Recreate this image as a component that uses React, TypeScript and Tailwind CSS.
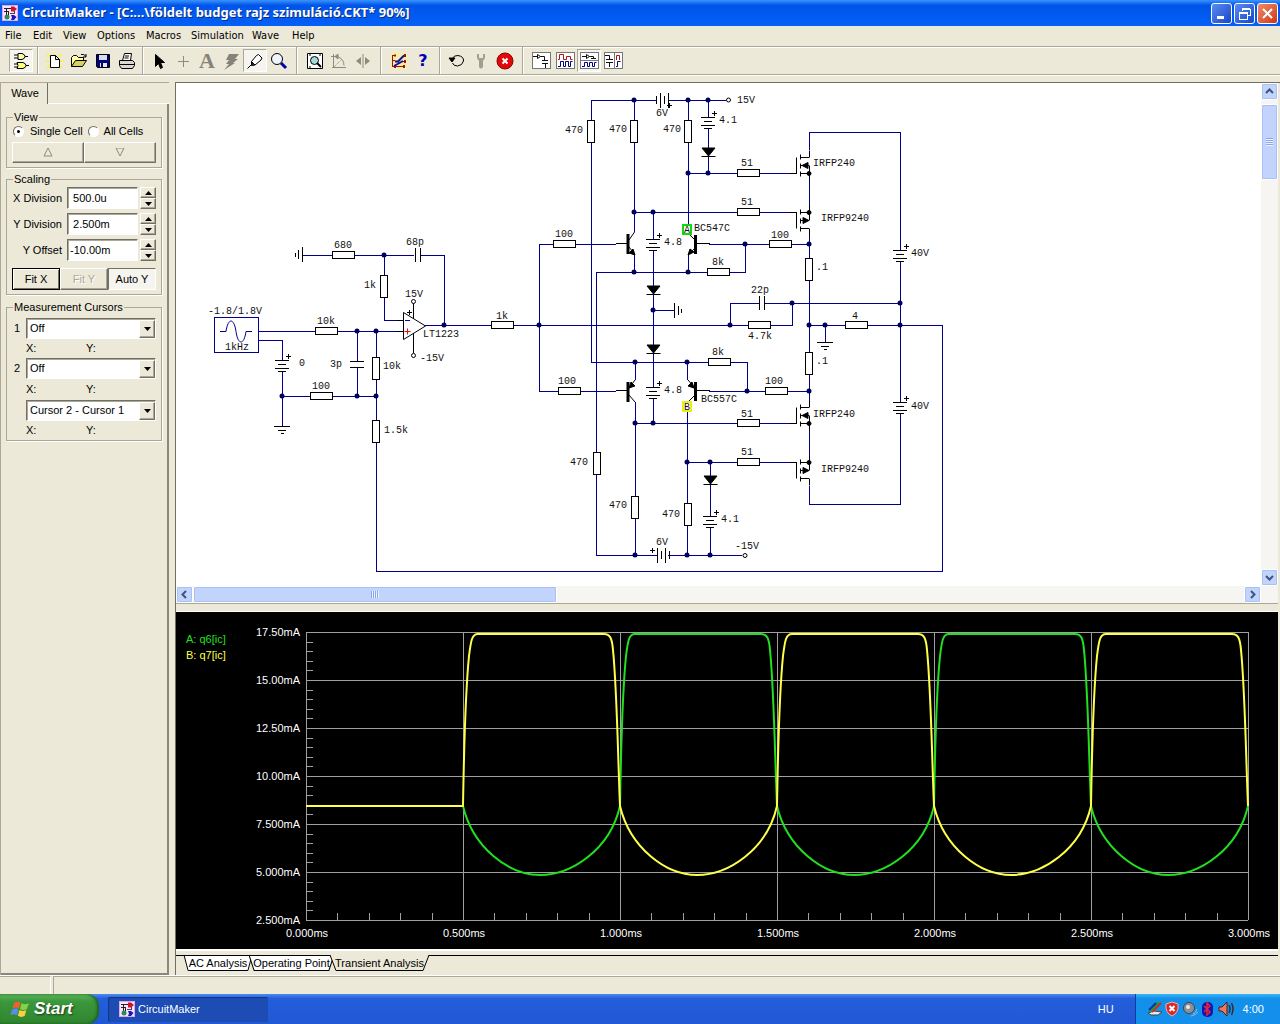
import type { ReactNode } from "react";
import clsx from "clsx";

const UI = "font-['Liberation_Sans',Arial,sans-serif]";
const TAHOMA = "font-['DejaVu_Sans_Condensed','DejaVu_Sans',sans-serif]";

const WIRE = "#00008b";

/* ---------- icons ---------- */

const Icon = ({ children, size = 18 }: { children: ReactNode; size?: number }) => (
  <svg width={size} height={size} viewBox="0 0 18 18" fill="none" stroke="#000" aria-hidden="true">
    {children}
  </svg>
);

const AppIcon = () => (
  <svg width="16" height="16" viewBox="0 0 16 16" fill="none" className="shrink-0" aria-hidden="true">
    <rect width="16" height="16" fill="#fbe4fb" />
    <rect x="0.500" y="0.500" width="15" height="15" stroke="#e0a8e8" />
    <path d="M2 3.500h7M2 6.500h5M4.500 3v8M6.500 6v5" stroke="#222" />
    <path d="M9 1.500h3l3 2.500-3 2.500H9z" fill="#d0122b" />
    <path d="M8 8.500h5M12.500 6v3" stroke="#444" />
    <circle cx="5" cy="12" r="2.500" fill="#2c8a56" />
    <path d="M9 10h3l2.500 2-2.500 3H9l1-2.500z" fill="#1616b8" />
  </svg>
);

const GateIcon = () => (
  <Icon>
    <path d="M6 1.500h4q3 1 3 3t-3 3H6zM2 3h4M2 6h4M13 4.500h3" fill="#ffffa8" />
    <path d="M5 10.500h6q3 1 3 3t-3 3H5q2-3 0-6zM2 12h4M2 15h4M14 13.500h3" fill="#ffff80" />
  </Icon>
);
const NewIcon = () => (
  <Icon>
    <path d="M1 2l3 3M0 9h3M1 16l3-3M16 2l-3 3M14 9h4M13 13l3 3M8 0v3" stroke="#f4f06a" strokeWidth="2" />
    <path d="M4.500 3.500h5l4 4v8h-9zM9.500 3.500v4h4" fill="#fff" />
  </Icon>
);
const OpenIcon = () => (
  <Icon>
    <path d="M1.500 14.500v-9l2-2h3l2 2h5v3" fill="#ffff9c" />
    <path d="M1.500 14.500l4-6h11l-4 6z" fill="#d8d060" />
    <path d="M11 2.500q3-1 5 2M16 2v3h-3" />
  </Icon>
);
const SaveIcon = () => (
  <Icon>
    <path d="M2.500 2.500h13v13h-12l-1-1z" fill="#00007c" />
    <path d="M5 3h8v5H5z" fill="#d8dce8" stroke="none" />
    <path d="M6 11h7v4H6z" fill="#e4e4e4" stroke="none" />
    <path d="M7 11h2v4H7z" fill="#00007c" stroke="none" />
  </Icon>
);
const PrintIcon = () => (
  <Icon>
    <path d="M4.500 8.500l2-7h7l-1 7z" fill="#fff" />
    <path d="M1.500 8.500h13l2 2v3l-2 3h-11l-2-3z" fill="#d8d8d0" />
    <path d="M1.500 12.500h15M7 4h4M6.500 6h4" />
  </Icon>
);
const ArrowIcon = () => (
  <Icon>
    <path d="M5.500 2.500v12l3-3 2 5 2-1-2-5h4z" fill="#000" />
  </Icon>
);
const PlusIcon = () => (
  <Icon>
    <path d="M9.500 4v11M4 9.500h11" stroke="#8d8b80" />
  </Icon>
);
const BoltIcon = () => (
  <Icon>
    <path d="M7 2h10l-4 5h3l-5 4h2l-11 7 5-6H4l3-4H4z" fill="#86847a" stroke="none" />
  </Icon>
);
const ProbeIcon = () => (
  <Icon>
    <path d="M1.500 16.500l4-4M5.500 9.500l5-6 2-1 3.500 3.500-1 2-6 5z" fill="#fff" />
    <path d="M5.500 9.500l3.500 3.500-3.500.500z" fill="#333" />
  </Icon>
);
const ZoomIcon = () => (
  <Icon>
    <circle cx="7" cy="7" r="5.500" fill="#eef4f8" />
    <path d="M11 11l5 5" stroke="#0000ac" strokeWidth="3" />
  </Icon>
);
const FitIcon = () => (
  <Icon>
    <path d="M1.500 1.500h15v15h-15z" fill="#fff" />
    <circle cx="8.500" cy="8.500" r="4" fill="#a8d8d8" />
    <path d="M11 11l4 4" strokeWidth="2" />
    <path d="M3 3h2M3 15h2M13 3h2" />
  </Icon>
);
const RotateIcon = () => (
  <Icon>
    <g stroke="#8d8b80">
      <path d="M3.500 2v14M1 4.500h4M2 15.500h14" />
      <path d="M7 4.500q7 2 7 9" />
      <path d="M4 15l8-8" strokeDasharray="1 1" />
      <path d="M8 2v5L5 4.500z" fill="#8d8b80" />
    </g>
  </Icon>
);
const MirrorIcon = () => (
  <Icon>
    <path d="M9 2v14" stroke="#8d8b80" />
    <path d="M7 5v8L2 9zM11 5v8l5-4z" fill="#8d8b80" stroke="none" />
  </Icon>
);
const CheckWiresIcon = () => (
  <Icon>
    <path d="M1 1h16v16H1z" fill="#f7efa4" stroke="none" />
    <path d="M2 3.500h4M2 8.500h3M2 14.500h12M2.500 3v12M13 3.500h3M13 9.500h3" stroke="#a01010" />
    <path d="M5 2.500v2M15 2v3M15 8v3M14 13v3M5 13v3" stroke="#a01010" strokeWidth="2" />
    <path d="M5 9.500h3l6-6M4 14l9-5" stroke="#1010a0" strokeWidth="2" />
  </Icon>
);
const UndoIcon = () => (
  <Icon>
    <path d="M4 7q2-4 6-3.500 6 1 5.500 5.500-1 4.500-6 5-4 0-5-3" />
    <path d="M1 6h6l-3 4z" fill="#000" />
  </Icon>
);
const WrenchIcon = () => (
  <Icon>
    <path d="M5 2v4l2 3v6q2 3 4 0V9l2-3V2h-2v4H7V2z" fill="#a19f94" stroke="none" />
  </Icon>
);
const StopIcon = () => (
  <Icon>
    <circle cx="9" cy="9" r="8" fill="#e00808" stroke="#8c0000" />
    <path d="M6.500 6.500l5 5M11.500 6.500l-5 5" stroke="#fff" strokeWidth="2" />
  </Icon>
);

const Frame = ({ children }: { children: ReactNode }) => (
  <svg width="19" height="18" viewBox="0 0 19 18" fill="none" stroke={WIRE} aria-hidden="true">
    <rect x="0.500" y="0.500" width="18" height="16" fill="#fff" stroke="#777" />
    {children}
  </svg>
);
const SchematicView = () => (
  <Frame>
    <path d="M1 4.500h4M5.500 2.500v4l3-2zM8.500 4.500h4v4M10 8.500h6M10 11.500h6M13.500 12v4" stroke="#111" />
  </Frame>
);
const WaveView = () => (
  <Frame>
    <path d="M2 7.500h1.500v-5h4v5h3v-3h4v3h2" stroke="#b01818" />
    <path d="M2 14.500h2.500v-5h3v5h2v-5h3v5h2v-5h2" />
  </Frame>
);
const SplitHView = () => (
  <Frame>
    <path d="M1 8.500h17" stroke="#777" />
    <path d="M2 4.500h4M6.500 2.500v4l3-2zM9.500 4.500h4v2M11 6.500h5" stroke="#111" />
    <path d="M2 14.500h2.500v-4h3v4h2v-4h3v4h2v-4h2" />
  </Frame>
);
const SplitVView = () => (
  <Frame>
    <path d="M10.500 1v15" stroke="#777" />
    <path d="M1 3.500h4.500v4M2 7.500h7M2 10.500h7M5.500 11v4" stroke="#111" />
    <path d="M12.500 8V3.500h3V8" stroke="#b01818" />
    <path d="M12 14.500h1.500v-5h3" />
  </Frame>
);

/* ---------- title, menu, toolbar ---------- */

const winBtn = "flex size-[21px] items-center justify-center rounded-[3px] border border-white";

const TitleBar = () => (
  <header className="flex h-[26px] shrink-0 items-center bg-linear-to-b from-[#3a93ff] via-[#0055e8] via-20% to-[#0460f8] pr-[2px] pl-[2px]">
    <AppIcon />
    <h1 className="ml-1 flex-1 truncate font-['Noto_Sans','Open_Sans',sans-serif] text-[13px] font-bold text-white [text-shadow:1px_1px_#0a2a80]">
      {"CircuitMaker - [C:...\\földelt budget rajz szimuláció.CKT* 90%]"}
    </h1>
    <div className="flex gap-[2px]">
      <button aria-label="Minimize" className={clsx(winBtn, "bg-linear-to-br from-[#5b8cf0] to-[#1844c8]")}>
        <svg width="13" height="13" viewBox="0 0 13 13"><path d="M2 9h7v3H2z" fill="#fff" /></svg>
      </button>
      <button aria-label="Restore" className={clsx(winBtn, "bg-linear-to-br from-[#5b8cf0] to-[#1844c8]")}>
        <svg width="13" height="13" viewBox="0 0 13 13" fill="none" stroke="#fff" shapeRendering="crispEdges">
          <path d="M4 4V2h8v6h-2M4 1h8M1 5h8v7H1zM1 6h8" />
        </svg>
      </button>
      <button aria-label="Close" className={clsx(winBtn, "bg-linear-to-br from-[#f08a68] to-[#cc3512]")}>
        <svg width="13" height="13" viewBox="0 0 13 13"><path d="M2 2l9 9M11 2l-9 9" stroke="#fff" strokeWidth="2" /></svg>
      </button>
    </div>
  </header>
);

const menus = [
  ["File", "w-[28px]"],
  ["Edit", "w-[30px]"],
  ["View", "w-[34px]"],
  ["Options", "w-[49px]"],
  ["Macros", "w-[45px]"],
  ["Simulation", "w-[61px]"],
  ["Wave", "w-[40px]"],
  ["Help", "w-[30px]"],
];

const MenuBar = () => (
  <nav className={clsx("flex h-[20px] shrink-0 items-center pl-[5px] text-[11px]", TAHOMA)}>
    {menus.map(([label, width]) => (
      <button key={label} className={clsx("text-left whitespace-nowrap", width)}>{label}</button>
    ))}
  </nav>
);

const Tool = ({ label, pressed, children }: { label: string; pressed?: boolean; children: ReactNode }) => (
  <button
    aria-label={label}
    className={clsx(
      "flex h-[23px] w-6 items-center justify-center",
      pressed && "border border-[#aca899] border-r-white border-b-white bg-[#f5f4ee]",
    )}
  >
    {children}
  </button>
);

const Sep = ({ className = "mx-1" }: { className?: string }) => (
  <div className={clsx("h-[27px] w-[2px] border-l border-[#aca899] bg-white", className)} />
);

const Toolbar = () => (
  <div className="flex h-[29px] shrink-0 items-center border-y border-[#aca899] pl-[9px] shadow-[inset_0_1px_0_#fff,0_1px_0_#fff]">
    <Tool label="Parts" pressed><GateIcon /></Tool>
    <Sep />
    <Tool label="New"><NewIcon /></Tool>
    <Tool label="Open"><OpenIcon /></Tool>
    <Tool label="Save"><SaveIcon /></Tool>
    <Tool label="Print"><PrintIcon /></Tool>
    <Sep className="mx-[3px]" />
    <Tool label="Select"><ArrowIcon /></Tool>
    <Tool label="Wire"><PlusIcon /></Tool>
    <Tool label="Text">
      <span className="font-['Liberation_Serif',serif] text-[22px] leading-none font-bold text-[#86847a]">A</span>
    </Tool>
    <Tool label="Delete"><BoltIcon /></Tool>
    <Tool label="Probe" pressed><ProbeIcon /></Tool>
    <Tool label="Zoom"><ZoomIcon /></Tool>
    <Sep className="mx-[5px]" />
    <Tool label="Fit"><FitIcon /></Tool>
    <Tool label="Rotate"><RotateIcon /></Tool>
    <Tool label="Mirror"><MirrorIcon /></Tool>
    <Sep className="mx-[5px]" />
    <Tool label="Check wires"><CheckWiresIcon /></Tool>
    <Tool label="Help">
      <span className="font-['DejaVu_Sans',sans-serif] text-[16px] leading-none font-bold text-[#0000b0]">?</span>
    </Tool>
    <Sep />
    <Tool label="Reset"><UndoIcon /></Tool>
    <Tool label="Setup"><WrenchIcon /></Tool>
    <Tool label="Stop"><StopIcon /></Tool>
    <Sep className="mx-[5px]" />
    <Tool label="Schematic"><SchematicView /></Tool>
    <Tool label="Waveforms"><WaveView /></Tool>
    <Tool label="Split horizontally" pressed><SplitHView /></Tool>
    <Tool label="Split vertically"><SplitVView /></Tool>
  </div>
);

/* ---------- wave panel ---------- */

const raised = "border border-white border-r-[#716f64] border-b-[#716f64] shadow-[inset_-1px_-1px_0_#aca899]";
const sunken = "border border-[#716f64] border-r-white border-b-white bg-white shadow-[inset_1px_1px_0_#aca899]";

const Group = ({ title, className, children }: { title: string; className?: string; children: ReactNode }) => (
  <fieldset className={clsx("mx-[5px] border border-[#aca899] shadow-[1px_1px_0_#fff]", className)}>
    <legend className="ml-[6px] px-px leading-[12px]">{title}</legend>
    {children}
  </fieldset>
);

const Spin = ({ label, id, value }: { label: string; id: string; value: string }) => (
  <div className="flex h-[22px] items-center">
    <label htmlFor={id} className="w-[55px] text-right">{label}</label>
    <input id={id} defaultValue={value} className={clsx("ml-[5px] h-[22px] w-[71px] pl-[2px] outline-none", sunken)} />
    <div className="ml-[2px] flex w-4 flex-col">
      <button aria-label={`${label} up`} className={clsx("flex h-[11px] items-center justify-center", raised)}>
        <svg width="7" height="4" viewBox="0 0 7 4"><path d="M0 4h7L3.500 0z" /></svg>
      </button>
      <button aria-label={`${label} down`} className={clsx("flex h-[11px] items-center justify-center", raised)}>
        <svg width="7" height="4" viewBox="0 0 7 4"><path d="M0 0h7L3.500 4z" /></svg>
      </button>
    </div>
  </div>
);

const Cursor = ({ label, name, value, tall }: { label: string; name: string; value: string; tall?: boolean }) => (
  <div>
    <div className="flex items-center">
      <span className="w-[19px] pl-[7px]">{label}</span>
      <div className="relative w-[130px]">
        <select aria-label={name} className={clsx("block h-[21px] w-full appearance-none pl-[3px] outline-none", sunken)}>
          <option>{value}</option>
        </select>
        <span className={clsx("pointer-events-none absolute top-[2px] right-px flex h-[18px] w-4 items-center justify-center bg-[#ece9d8]", raised)}>
          <svg width="7" height="4" viewBox="0 0 7 4"><path d="M0 0h7L3.500 4z" /></svg>
        </span>
      </div>
    </div>
    <div className={clsx("flex items-center pl-[19px]", tall ? "h-[21px]" : "h-[19px]")}>
      <span className="w-[60px]">X:</span>
      <span>Y:</span>
    </div>
  </div>
);

const radio = "relative size-[11px] appearance-none rounded-full border border-[#716f64] border-r-white border-b-white bg-white checked:after:absolute checked:after:inset-[3px] checked:after:rounded-full checked:after:bg-black";

const WavePanel = () => (
  <aside className={clsx("flex w-[169px] shrink-0 flex-col border-t border-l border-[#aca899] text-[11px]", UI)}>
    <div className="flex h-[21px] items-end">
      <button className="h-[21px] w-[47px] border-r border-[#716f64] pl-[2px] text-center">Wave</button>
      <span className="h-px flex-1 bg-white" />
    </div>
    <div className="flex-1 border-r-2 border-b-2 border-[#8a887b] pt-[7px]">
      <Group title="View" className="h-[57px]">
        <div className="flex h-4 items-center pl-[6px]">
          <label className="flex items-center gap-[6px]">
            <input type="radio" name="cell" defaultChecked className={radio} />
            Single Cell
          </label>
          <label className="ml-[5px] flex items-center gap-[5px]">
            <input type="radio" name="cell" className={radio} />
            All Cells
          </label>
        </div>
        <div className="mx-[5px] mt-[3px] flex">
          <button aria-label="Previous cell" className={clsx("flex h-[21px] flex-1 items-center justify-center", raised)}>
            <svg width="11" height="9" viewBox="0 0 11 9"><path d="M1 8h8L5 0z" fill="none" stroke="#8d8b80" /></svg>
          </button>
          <button aria-label="Next cell" className={clsx("flex h-[21px] flex-1 items-center justify-center", raised)}>
            <svg width="11" height="9" viewBox="0 0 11 9"><path d="M1 0h8L5 8z" fill="none" stroke="#8d8b80" /></svg>
          </button>
        </div>
      </Group>
      <Group title="Scaling" className="mt-[5px] pb-1">
        <div className="flex flex-col gap-1 pt-[2px]">
          <Spin label="X Division" id="xdiv" value=" 500.0u" />
          <Spin label="Y Division" id="ydiv" value=" 2.500m" />
          <Spin label="Y Offset" id="yoff" value="-10.00m" />
        </div>
        <div className="mx-[5px] mt-[7px] flex">
          <button className="h-[22px] flex-1 border border-black shadow-[inset_1px_1px_0_#fff,inset_-1px_-1px_0_#716f64]">Fit X</button>
          <button disabled className={clsx("h-[22px] flex-1 text-[#aca899] [text-shadow:1px_1px_#fff]", raised)}>Fit Y</button>
          <button className="h-[22px] flex-1 border border-[#716f64] border-r-white border-b-white bg-[#f5f4ee] pt-px">Auto Y</button>
        </div>
      </Group>
      <Group title="Measurement Cursors" className="mt-[6px] pt-[5px]">
        <Cursor label="1" name="Cursor 1" value="Off" />
        <Cursor label="2" name="Cursor 2" value="Off" tall />
        <Cursor label="" name="Difference" value="Cursor 2 - Cursor 1" />
      </Group>
    </div>
  </aside>
);

/* ---------- schematic ---------- */

const wires = [
  "M302 255H332M353 255H414M420 255H444V325M384 255V275M384 297V320H403",
  "M258 331H315M337 331H403M258 340H282V360M282 371V426M282 396H310M332 396H376",
  "M357 331V361M357 367V396M376 331V357M376 379V420M376 442V571H942V325H867",
  "M425 325H491M513 325H748M770 325H792V303M730 325V303H759M765 303H900",
  "M553 244H539V391H558M575 244H616M580 391H616",
  "M591 120V100H656M591 142V362H708M730 362H747V391",
  "M634 100V120M634 142V232M669 100H726M688 100V120M688 142V224M708 100V117M708 128V173",
  "M688 173H737M759 173H790M634 212H737M759 212H790M653 212V239M653 250V387M653 310H674",
  "M634 255V272M596 452V272H707M688 272V254M729 272H745V244M709 244H769M791 244H809",
  "M809 150V132H900V250M900 261V402M900 413V504H809V486M809 180V206M809 235V258M809 280V352M809 374V402",
  "M809 325H845M825 325V342M809 430V456",
  "M635 362V380M635 402V496M635 518V555M653 398V423M687 362V380M709 391H765M787 391H809",
  "M635 423H737M759 423H790M687 411V503M687 525V555M687 462H737M759 462H790",
  "M710 462V516M710 527V555M596 474V555H657M668 555H742",
];

const dots = [
  [384, 255], [444, 325], [357, 331], [376, 331], [282, 396], [357, 396], [376, 396], [539, 325],
  [634, 100], [688, 100], [708, 100], [688, 173], [708, 173], [634, 212], [653, 212], [634, 272],
  [688, 272], [745, 244], [809, 244], [653, 310], [730, 325], [792, 303], [900, 303], [809, 325],
  [825, 325], [900, 325], [635, 362], [687, 362], [747, 391], [809, 391], [635, 423], [653, 423],
  [687, 462], [710, 462], [635, 555], [687, 555], [710, 555],
];

// left edge and centre line
const hResistors = [
  [332, 255], [315, 331], [310, 396], [491, 325], [553, 244], [558, 391], [737, 173], [737, 212],
  [707, 272], [769, 244], [748, 325], [845, 325], [708, 362], [765, 391], [737, 423], [737, 462],
];

// centre line and top edge
const vResistors = [
  [384, 275], [376, 357], [376, 420], [591, 120], [634, 120], [688, 120], [809, 258], [809, 352],
  [597, 452], [635, 496], [688, 503],
];

const batteries = [[282, 360], [708, 117], [653, 239], [900, 250], [900, 402], [653, 387], [710, 516]];
const diodes = [[708, 148], [653, 286], [653, 345], [710, 476]];

const labels: [number, number, string][] = [
  [334, 248, "680"], [406, 245, "68p"], [364, 288, "1k"], [405, 297, "15V"], [420, 361, "-15V"],
  [423, 337, "LT1223"], [208, 314, "-1.8/1.8V"], [225, 350, "1kHz"], [317, 324, "10k"], [299, 366, "0"],
  [330, 367, "3p"], [383, 369, "10k"], [312, 389, "100"], [384, 433, "1.5k"], [496, 319, "1k"],
  [565, 133, "470"], [609, 132, "470"], [663, 132, "470"], [656, 116, "6V"], [737, 103, "15V"],
  [719, 123, "4.1"], [741, 166, "51"], [741, 205, "51"], [813, 166, "IRFP240"], [821, 221, "IRFP9240"],
  [555, 237, "100"], [664, 245, "4.8"], [694, 231, "BC547C"], [712, 265, "8k"], [771, 238, "100"],
  [816, 270, ".1"], [911, 256, "40V"], [751, 293, "22p"], [748, 339, "4.7k"], [852, 319, "4"],
  [712, 355, "8k"], [816, 364, ".1"], [558, 384, "100"], [664, 393, "4.8"], [701, 402, "BC557C"],
  [765, 384, "100"], [813, 417, "IRFP240"], [911, 409, "40V"], [741, 417, "51"], [741, 455, "51"],
  [821, 472, "IRFP9240"], [570, 465, "470"], [609, 508, "470"], [662, 517, "470"], [721, 522, "4.1"],
  [656, 545, "6V"], [735, 549, "-15V"],
];

const Mosfet = ({ y, n }: { y: number; n?: boolean }) => (
  <g>
    <path d={`M796.500 ${y - 8}v16M790 ${n ? y + 8 : y - 8}h7M800.500 ${y - 11}v5M800.500 ${y - 2}v5M800.500 ${y + 6}v5`} />
    <path d={`M801 ${y - 8}h8M801 ${y}h8M801 ${y + 8}h8M809.500 ${n ? y : y - 15}V${y + (n ? 15 : 0)}M809.500 ${n ? y - 8 : y + 8}v${n ? -7 : 7}`} />
    <path d={n ? `M802 ${y}l6-3v6z` : `M809 ${y}l-6-3v6z`} fill="#000" />
    <circle cx="809" cy={n ? y + 8 : y - 8} r="2" fill="#000" />
  </g>
);

const Schematic = () => (
  <svg width="1085" height="503" viewBox="176 83 1085 503" className="block" role="img" aria-label="Schematic">
    <g fill="none" stroke={WIRE} shapeRendering="crispEdges">
      {wires.map((d) => <path key={d} d={d} />)}
      <rect x="214" y="317" width="44" height="35" />
    </g>
    <path d="M220 331.500h6c2-14 8-14 10 0s8 14 10 0h6" fill="none" stroke={WIRE} />

    <g fill="none" stroke="#000" shapeRendering="crispEdges">
      {hResistors.map(([x, y]) => <rect key={`${x}-${y}`} x={x} y={y - 4} width="22" height="7" fill="#fff" />)}
      {vResistors.map(([x, y]) => <rect key={`${x}-${y}`} x={x - 4} y={y} width="7" height="22" fill="#fff" />)}
      {batteries.map(([x, y]) => (
        <path key={`${x}-${y}`} d={`M${x - 7} ${y}h14M${x - 4} ${y + 4}h8M${x - 7} ${y + 8}h14M${x - 4} ${y + 11}h8M${x + 4} ${y - 4}h5M${x + 6} ${y - 6}v5`} />
      ))}
      <path d="M656 96v8M660 93v15M664 96v8M668 93v15M667 105h5M669 103v5" />
      <path d="M657 548v15M661 551v8M665 548v15M669 551v8M650 550h5M652 548v5" />
      {/* capacitors */}
      <path d="M415 248v14M420 248v14M350 361h14M350 367h14M759 296v14M764 296v14" />
      {/* grounds */}
      <path d="M302 247v15M298 250v9M295 253v4M274 426h16M278 430h8M281 433h3" />
      <path d="M674 303v15M678 306v9M681 309v4M817 342h16M821 346h8M824 349h3" />
      <path d="M413 303v15M413 332v21M397 320h6M397 331h6M407 312h5M409 310v5" />
    </g>

    <g fill="none" stroke="#000">
      {diodes.map(([x, y]) => (
        <path key={`${x}-${y}`} d={`M${x - 6} ${y}h13l-6.500 8zM${x - 6.500} ${y + 8.500}h14`} fill="#000" />
      ))}
      <Mosfet y={165.5} n />
      <Mosfet y={220.5} />
      <Mosfet y={415.5} n />
      <Mosfet y={470.5} />
      <path d="M403.500 312.500v27l22-13.500z" fill="#fff" />
      <path d="M413.500 313v5.500M413.500 333v5M407 312.500h5M409.500 310v5" />
      <path d="M405 320.500h5" stroke="#0000d0" />
      <path d="M404.500 331.500h6M407.500 328.500v6" stroke="#e01010" />
      <g fill="#fff">
        <circle cx="413.500" cy="301.500" r="2" />
        <circle cx="413.500" cy="355.500" r="2" />
        <circle cx="728.500" cy="100" r="2" />
        <circle cx="745" cy="555.500" r="2" />
      </g>
      {/* transistors */}
      <path d="M628 234v20M628 382v20M695.500 235v19M695.500 382v19" strokeWidth="3" />
      <path d="M616 243.500h11M629 240l5.500-8M629 247l5.500 7M695 240l-6-6M695 248l-6 6M697 243.500h13" />
      <path d="M635 255l-6-2 4-4zM688 255l2-6 4 3z" fill="#000" />
      <path d="M616 390.500h11M629 388l6-8M629 395l6 7M695 388l-7-8M695 395l-7 7M697 390.500h13" />
      <path d="M629 388l2-6 4 4zM694 388l-2-6-4 4z" fill="#000" />
    </g>

    <g fill="#00005c">
      {dots.map(([x, y]) => <circle key={`${x}-${y}`} cx={x} cy={y} r="2.500" />)}
    </g>

    <g fill="#fff" strokeWidth="2" shapeRendering="crispEdges">
      <rect x="683" y="225" width="8" height="9" stroke="#10d810" />
      <rect x="683" y="402" width="8" height="9" stroke="#f0ec10" />
    </g>

    <g fill="#111" className="font-['Liberation_Mono','Courier_New',monospace] text-[10px]">
      {labels.map(([x, y, text]) => <text key={`${x}-${y}`} x={x} y={y}>{text}</text>)}
      <text x="684" y="233">A</text>
      <text x="684" y="410">B</text>
    </g>
  </svg>
);

/* ---------- scroll bars ---------- */

const thumb = "flex items-center justify-center rounded-[2px] border border-white bg-[#c2d4fc] shadow-[inset_0_0_0_1px_#a9c0f4]";

const Chevron = ({ d }: { d: string }) => (
  <svg width="9" height="9" viewBox="0 0 9 9" fill="none" stroke="#3c5682" strokeWidth="2"><path d={d} /></svg>
);

const VScroll = () => (
  <div className="flex w-[17px] shrink-0 flex-col bg-[#f6f5f1]">
    <button aria-label="Scroll up" className={clsx(thumb, "size-[17px]")}><Chevron d="M1 6l3.500-3.500L8 6" /></button>
    <div className={clsx(thumb, "mt-1 h-[76px]")}>
      <span className="h-[8px] w-[7px] bg-[repeating-linear-gradient(#8ba6e8_0_1px,#eef3ff_1px_2px)]" />
    </div>
    <button aria-label="Scroll down" className={clsx(thumb, "mt-auto size-[17px]")}><Chevron d="M1 3l3.500 3.500L8 3" /></button>
  </div>
);

const HScroll = () => (
  <div className="flex h-[17px] shrink-0 bg-[#f6f5f1]">
    <button aria-label="Scroll left" className={clsx(thumb, "size-[17px]")}><Chevron d="M6 1L2.500 4.500 6 8" /></button>
    <div className={clsx(thumb, "w-[33%]")}>
      <span className="h-[7px] w-[8px] bg-[repeating-linear-gradient(90deg,#8ba6e8_0_1px,#eef3ff_1px_2px)]" />
    </div>
    <button aria-label="Scroll right" className={clsx(thumb, "mr-[17px] ml-auto size-[17px]")}><Chevron d="M3 1l3.500 3.500L3 8" /></button>
  </div>
);

/* ---------- wave plot ---------- */

const X0 = 306;
const STEP = 157;
const yLabels = ["17.50mA", "15.00mA", "12.50mA", "10.00mA", "7.500mA", "5.000mA", "2.500mA"];
const xLabels = ["0.000ms", "0.500ms", "1.000ms", "1.500ms", "2.000ms", "2.500ms", "3.000ms"];

// one half period: clipped top or rounded bottom
const top = "c1-60 3-120 6-150 2-16 3-22 9-22h126c6 0 8 4 9 16 4 40 5 110 7 156";
const bottom = "c10 42 46 69 77 69s70-25 80-69";

const yellow = `M306 806H463${top}${bottom}${top}${bottom}${top}`;
const green = `M306 806H463${bottom}${top}${bottom}${top}${bottom}`;

const WavePlot = () => (
  <svg viewBox="176 612 1102 337" className="block h-full w-full" role="img" aria-label="Transient analysis">
    <g stroke="#a0a0a0" fill="none" shapeRendering="crispEdges">
      {yLabels.map((l, i) => <path key={l} d={`M${X0} ${632 + i * 48}H1248`} />)}
      {xLabels.map((l, i) => <path key={l} d={`M${X0 + i * STEP} 632V920`} />)}
      {Array.from({ length: 30 }, (_, i) => <path key={i} d={`M${X0} ${Math.round(632 + i * 9.6)}h7`} />)}
      {Array.from({ length: 30 }, (_, i) => <path key={i} d={`M${Math.round(X0 + i * 31.4)} 920v-7`} />)}
    </g>
    <g fill="none" strokeWidth="2">
      <path d={green} stroke="#20e020" />
      <path d={yellow} stroke="#ffff48" />
    </g>
    <g fill="#fff" className={clsx("text-[11px]", UI)}>
      {yLabels.map((l, i) => <text key={l} x="300" y={636 + i * 48} textAnchor="end">{l}</text>)}
      {xLabels.map((l, i) => <text key={l} x={X0 + 1 + i * STEP} y="937" textAnchor="middle">{l}</text>)}
      <text x="186" y="643" fill="#20e020">A: q6[ic]</text>
      <text x="186" y="659" fill="#ffff48">B: q7[ic]</text>
    </g>
  </svg>
);

const tabs = [
  { label: "AC Analysis", width: "w-[68px]" },
  { label: "Operating Point", width: "-ml-[3px] w-[85px]" },
  { label: "Transient Analysis", width: "-ml-[4px] w-[99px]", active: true },
];

const PlotTabs = () => (
  <div className={clsx("h-[26px] shrink-0 border-t-2 border-white pt-[4px] text-[11px]", UI)}>
    <div className="flex border-t border-black pl-2">
      {tabs.map((tab) => (
        <button key={tab.label} className={clsx("relative -mt-px h-[16px] leading-[16px] whitespace-nowrap", tab.width)}>
          <svg viewBox="0 0 100 16" preserveAspectRatio="none" className="absolute inset-0 h-full w-full overflow-visible" aria-hidden="true">
            <path
              d="M0 0L6 15.500H94L100 0"
              fill={tab.active ? "#ece9d8" : "#fff"}
              stroke="#000"
              vectorEffect="non-scaling-stroke"
            />
            {!tab.active && <path d="M0 0.500H100" stroke="#000" vectorEffect="non-scaling-stroke" />}
          </svg>
          <span className="relative">{tab.label}</span>
        </button>
      ))}
    </div>
  </div>
);

/* ---------- taskbar ---------- */

const Flag = () => (
  <svg width="20" height="20" viewBox="0 0 19 18" aria-hidden="true">
    <path d="M4 3q4-2 6 0L8.500 8.500q-3-2-6 0z" fill="#f0602c" />
    <path d="M11 3.500q3 2 7 0L16 9q-3 2-6.500 0z" fill="#8cd04a" />
    <path d="M2 9.500q4-2 6 0L6.500 15q-3-2-6 0z" fill="#5a8cf0" />
    <path d="M9 10q3 2 6.500 0L14 15.500q-3 2-6.500 0z" fill="#fcd23c" />
  </svg>
);

const TrayIcons = () => (
  <svg width="88" height="16" viewBox="0 0 88 16" fill="none" aria-hidden="true">
    <path d="M1 12l6-2 8 1-4 3H4z" fill="#e8e8e8" stroke="#444" />
    <path d="M5 11l9-9" stroke="#e02020" strokeWidth="2" />
    <path d="M3 11l9-10" stroke="#18a030" strokeWidth="2" />
    <path d="M2 9l7-7" stroke="#1828b0" strokeWidth="2" />
    <path d="M19 3l6-2 6 2q1 9-6 12-7-3-6-12z" fill="#d82828" stroke="#f0b0b0" />
    <path d="M22.500 5l5 5M27.500 5l-5 5" stroke="#fff" strokeWidth="2" />
    <circle cx="42" cy="7" r="5.500" fill="#8c9098" stroke="#444" />
    <circle cx="41" cy="6" r="2" fill="#e8eaf0" />
    <path d="M46 13q3-1 4-5M44 15q5-1 7-4" stroke="#8cbcf0" />
    <rect x="55" y="1" width="11" height="15" rx="5" fill="#0a18b8" />
    <path d="M57 5l6 6-3 3V2l3 3-6 6" stroke="#f02030" strokeWidth="1.500" />
    <path d="M72 6h3l5-5v14l-5-5h-3z" fill="#f07858" stroke="#402020" />
    <path d="M82 4q2 4 0 8M84.500 2q3 6 0 12" stroke="#402828" strokeWidth="1.500" />
  </svg>
);

const Taskbar = () => (
  <footer className={clsx("flex h-[30px] shrink-0 items-center bg-linear-to-b from-[#4a8cf0] via-[#245edb] via-15% to-[#2158d4] text-[11px] text-white", UI)}>
    <button className="flex h-full w-[99px] items-center gap-1 rounded-r-[12px] bg-linear-to-b from-[#5cb45c] via-[#3c983c] via-25% to-[#2e842e] pl-[10px] shadow-[inset_-2px_0_3px_#1c5c1c]">
      <Flag />
      <span className="text-[17px] font-bold italic [text-shadow:1px_1px_2px_#143c14]">Start</span>
    </button>
    <button className="ml-[9px] flex h-[25px] w-[160px] items-center gap-[3px] rounded-[2px] bg-[#1c4cb4] pl-[11px] shadow-[inset_1px_1px_1px_#123880]">
      <AppIcon />
      CircuitMaker
    </button>
    <span className="mr-[21px] ml-auto">HU</span>
    <div className="flex h-full items-center border-l border-[#0a3c9c] bg-linear-to-b from-[#38b4f8] via-[#1290e8] via-15% to-[#1490ec] pl-[11px]">
      <TrayIcons />
      <time className="mr-[16px] ml-[8px]">4:00</time>
    </div>
  </footer>
);

const App = () => (
  <div className={clsx("flex h-screen min-h-[760px] flex-col overflow-hidden bg-[#ece9d8] text-black", UI)}>
    <TitleBar />
    <MenuBar />
    <Toolbar />
    <div className="mt-[7px] flex min-h-0 flex-1">
      <WavePanel />
      <main className="ml-[6px] flex min-w-0 flex-1 flex-col border-t border-l border-[#716f64] pr-[2px]">
        <div className="flex shrink-0 bg-white">
          <div className="min-w-0 flex-1 overflow-hidden">
            <Schematic />
          </div>
          <VScroll />
        </div>
        <HScroll />
        <div className="h-[9px] shrink-0 border-t border-b border-[#aca899] border-b-white" />
        <div className="min-h-0 flex-1 bg-black">
          <WavePlot />
        </div>
        <PlotTabs />
      </main>
    </div>
    <div className="flex h-[19px] shrink-0 gap-[2px] border-t border-white">
      <span className="w-[51px] border-t border-r border-[#aca899] border-r-white" />
      <span className="flex-1 border-t border-l border-[#aca899]" />
    </div>
    <Taskbar />
  </div>
);

export default App;
